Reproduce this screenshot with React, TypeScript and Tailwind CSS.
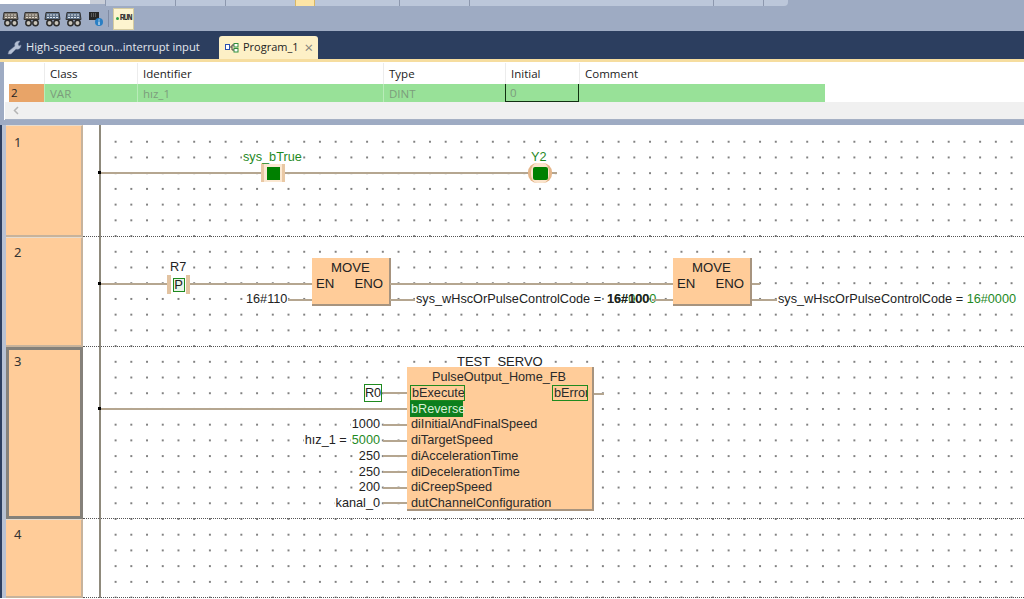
const wire = "absolute h-[2px] bg-[#b5a690]";

function ToolIcon({ blue, info }: { blue?: boolean; info?: boolean }) {
  if (info) {
    return (
      <svg width="18" height="16" viewBox="0 0 18 16" className="shrink-0">
        <rect x="3" y="1" width="10" height="8" fill="#262626" />
        <path d="M5 3h6M5 5h6" stroke="#8d8d8d" strokeDasharray="1 1" />
        <circle cx="13" cy="11" r="4" fill="#2a7fc4" />
        <path d="M13 8.5v1M13 10.5v3.5" stroke="#fff" />
      </svg>
    );
  }
  return (
    <svg width="18" height="16" viewBox="0 0 18 16" className="shrink-0">
      <path d="M2 1.5h13l1 7H1z" fill={blue ? "#5f7187" : "#7c746a"} stroke="#333" />
      <path d="M3 4h12M3 6.5h12" stroke={blue ? "#dfe8f0" : "#ddd8ce"} strokeDasharray="2 1" />
      <circle cx="5.5" cy="12" r="2.7" fill="#c9c4ba" stroke="#2b2b2b" strokeWidth="1.5" />
      <circle cx="12.5" cy="12" r="2.7" fill="#c9c4ba" stroke="#2b2b2b" strokeWidth="1.5" />
    </svg>
  );
}

function TopStrip() {
  return (
    <div className="flex h-[6px] bg-[#9eabc3]">
      <div className="h-[4px] w-[90px] bg-white" />
      <div className="h-[4px] w-[15px] bg-[#c9ced8]" />
      <div className="w-[70px] border-l border-[#8d98ae] bg-[#bcc7da]" />
      <div className="w-[50px] border-l border-[#8d98ae] bg-[#bcc7da]" />
      <div className="w-[70px] border-l border-[#8d98ae] bg-[#bcc7da]" />
      <div className="w-[20px] border-x border-[#d9b765] bg-[#fde5a6]" />
      <div className="w-[84px] bg-[#bcc7da]" />
      <div className="w-[70px] border-l border-[#8d98ae] bg-[#bcc7da]" />
      <div className="w-[244px] border-l border-[#8d98ae] bg-[#bcc7da]" />
      <div className="w-[50px] border-l border-[#8d98ae] bg-[#bcc7da]" />
      <div className="w-[25px] rounded-br-sm border-l border-[#8d98ae] bg-[#bcc7da]" />
    </div>
  );
}

function Toolbar() {
  return (
    <div className="flex h-[25px] items-center bg-[#9eabc3] pl-[2px]">
      <div className="flex w-[105px] gap-[3px]">
        <ToolIcon />
        <ToolIcon />
        <ToolIcon blue />
        <ToolIcon blue />
        <ToolIcon info />
      </div>
      <div className="ml-[1px] h-[17px] w-px bg-[#7f8ba3]" />
      <div className="ml-[4px] flex h-[22px] w-[21px] items-center justify-center gap-px border border-[#d5cba0] bg-[#fdf4cf] font-['Liberation_Mono',monospace] text-[8.5px] font-bold text-[#333]">
        <span className="h-[3px] w-[3px] shrink-0 rounded-full bg-[#2e9e4a]" />
        <span className="tracking-[-1.2px]">RUN</span>
      </div>
    </div>
  );
}

function Tabs() {
  return (
    <div className="flex h-[28px] items-end bg-[#2c3e5f] font-['Open_Sans',sans-serif] text-[11.2px]">
      <div className="flex h-[23px] w-[219px] items-center gap-[4px] pl-[7px] text-[#e4e8ef]">
        <svg width="15" height="15" viewBox="0 0 15 15">
          <path d="M1 14l1-3 6-5c-1-3 1-5 5-5l-2 3 1 2 2-1c0 3-2 5-5 4l-5 5z" fill="#b5c0d4" stroke="#7e8ba5" strokeWidth="0.5" />
        </svg>
        <span className="whitespace-nowrap">High-speed coun...interrupt input</span>
      </div>
      <div className="flex h-[23px] w-[99px] items-center rounded-t-[3px] bg-[#fdf0c6] pl-[6px] text-[11px] text-[#222]">
        <svg width="14" height="10" viewBox="0 0 14 10" className="shrink-0">
          <rect x="0.5" y="1.5" width="4" height="5" fill="#fff" stroke="#2a4fb0" />
          <rect x="9" y="0.5" width="4" height="3.5" fill="#fff" stroke="#2f8f3f" />
          <rect x="9" y="5.5" width="4" height="3.5" fill="#fff" stroke="#2f8f3f" />
          <path d="M5 4h2v-2h2M7 4v3h2" fill="none" stroke="#444" />
        </svg>
        <span className="ml-[4px] whitespace-nowrap">Program_1</span>
        <span className="ml-[6px] text-[15px] leading-none text-[#85857c]">×</span>
      </div>
    </div>
  );
}

function VarTable() {
  const head = "flex items-center border-l border-[#ececec] pl-[5px]";
  const cell = "flex items-center border-l border-[#b9ecb9] pl-[5px]";
  return (
    <div className="border-t-[3px] border-[#f6dd9f] bg-[#9eabc3] pb-[5px] pl-[4px] font-['Open_Sans',sans-serif] text-[11.5px]">
      <div className="bg-white pl-px">
        <div className="grid h-[22px] grid-cols-[39px_93px_246px_122px_74px_246px] pt-px text-[#222]">
          <div />
          <div className={head}>Class</div>
          <div className={head}>Identifier</div>
          <div className={head}>Type</div>
          <div className={head}>Initial</div>
          <div className={head}>Comment</div>
        </div>
        <div className="ml-[4px] grid h-[18px] w-[816px] grid-cols-[35px_93px_246px_122px_74px_246px] items-stretch bg-[#98e198] text-[#7c9c7c]">
          <div className="flex items-center bg-[#e8a468] pl-[2px] pb-px text-[#222]">2</div>
          <div className={cell}>VAR</div>
          <div className={cell}>hız_1</div>
          <div className={cell}>DINT</div>
          <div className="flex items-center border-x border-b border-[#123012] pl-[4px]">0</div>
          <div className="flex items-center pl-[6px]" />
        </div>
        <div className="flex h-[18px] items-center border-b border-[#a5b0c4] bg-[#f0f0f0] pl-[8px]">
          <svg width="6" height="9" viewBox="0 0 6 9">
            <path d="M5 1L1.5 4.5L5 8" fill="none" stroke="#b5b5b5" strokeWidth="1.5" />
          </svg>
        </div>
      </div>
    </div>
  );
}

function Network({ num, height, pad, focused, children }: { num: number; height: string; pad: string; focused?: boolean; children: React.ReactNode }) {
  const cellStyle = focused
    ? "border-[3px] border-[#85817a] pl-[5px]"
    : "border-b-2 border-r-2 border-t border-[#c7b39c] border-t-[#e6dcd0] pl-[8px]";
  return (
    <div className={`flex ${height}`}>
      <div className={`w-[77px] shrink-0 bg-[#ffcc99] text-[13px] text-[#333] ${pad} ${cellStyle}`}>
        {num}
      </div>
      <div className="w-[16px] shrink-0 border-b border-dotted border-[#555] bg-white" />
      <div className="relative min-w-0 flex-1 border-b border-l-2 border-solid border-b-[#555] border-l-[#8f8a7c] bg-white bg-[radial-gradient(circle,#3a3a3a_0.55px,transparent_0.95px)] bg-[length:15.72px_15.72px] bg-fixed bg-[position:-2.3px_-7.6px] font-['Liberation_Sans',Arial,sans-serif] text-[12.7px] leading-none text-[#222] [border-bottom-style:dotted]">
        {children}
      </div>
    </div>
  );
}

function Label({ className, children }: { className: string; children: React.ReactNode }) {
  return <span className={`absolute whitespace-nowrap bg-white px-px ${className}`}>{children}</span>;
}

function MoveBlock({ className }: { className: string }) {
  return (
    <div className={`absolute flex h-[48px] w-[79px] flex-col border-b-2 border-r-2 border-[#a7947f] bg-[#ffcc99] px-[4px] pt-[2px] text-[13.2px] leading-[16px] ${className}`}>
      <div className="text-center">MOVE</div>
      <div className="flex justify-between pr-[2px]">
        <span>EN</span>
        <span>ENO</span>
      </div>
    </div>
  );
}

function Network1() {
  return (
    <>
      <div className="absolute inset-x-0 top-0 h-[4px] bg-white" />
      <span className="absolute left-[-3px] top-[46px] h-[3px] w-[3px] bg-black" />
      <div className={`${wire} left-0 top-[47px] w-[427px]`} />
      <Label className="left-[141px] top-[26px] text-[#1f8a1f]">sys_bTrue</Label>
      <div className="absolute left-[160px] top-[39px] flex h-[18px] w-[24px] items-center justify-center border-x-[3px] border-[#e9c8a4] bg-[#fbe8d2]">
        <span className="h-[13px] w-[13px] bg-[#008000]" />
      </div>
      <Label className="left-[429px] top-[26px] text-[#1f8a1f]">Y2</Label>
      <div className="absolute left-[427px] top-[38px] flex h-[20px] w-[24px] items-center justify-center rounded-[9px] border-x-[3px] border-[#e5b68a] bg-[#fbe4cc]">
        <span className="h-[13px] w-[15px] rounded-[2px] bg-[#008000]" />
      </div>
      <div className={`${wire} left-[451px] top-[47px] w-[5px]`} />
    </>
  );
}

function Network2() {
  return (
    <>
      <span className="absolute left-[-3px] top-[45px] h-[3px] w-[3px] bg-black" />
      <div className={`${wire} left-0 top-[46px] w-[211px]`} />
      <Label className="left-[68px] top-[24px]">R7</Label>
      <div className="absolute left-[66px] top-[38px] flex h-[19px] w-[23px] items-center justify-center border-x-[4px] border-[#e2c3a1] bg-white">
        <span className="flex h-[14px] w-[12px] items-center justify-center border border-[#1f8a1f] bg-[#e9f5e9] text-[13px]">P</span>
      </div>
      <MoveBlock className="left-[211px] top-[21px]" />
      <Label className="left-[144px] top-[56px]">16#110</Label>
      <div className={`${wire} left-[187px] top-[62px] w-[24px]`} />
      <div className={`${wire} left-[289px] top-[46px] w-[283px]`} />
      <div className={`${wire} left-[289px] top-[62px] w-[25px]`} />
      <Label className="left-[314px] top-[56px]">sys_wHscOrPulseControlCode =</Label>
      <span className="absolute left-[506px] top-[56px] whitespace-nowrap text-[#1f8a1f]">16#0000</span>
      <span className="absolute left-[506px] top-[56px] whitespace-nowrap font-semibold">16#100</span>
      <div className={`${wire} left-[551px] top-[62px] w-[21px]`} />
      <MoveBlock className="left-[572px] top-[21px]" />
      <div className={`${wire} left-[651px] top-[46px] w-[8px]`} />
      <div className={`${wire} left-[651px] top-[62px] w-[25px]`} />
      <Label className="left-[676px] top-[56px]">sys_wHscOrPulseControlCode = <span className="text-[#1f8a1f]">16#0000</span></Label>
    </>
  );
}

const pins: { value: string; label: string; prefix?: string; green?: boolean }[] = [
  { value: "1000", label: "diInitialAndFinalSpeed" },
  { value: "5000", label: "diTargetSpeed", prefix: "hız_1 =", green: true },
  { value: "250", label: "diAccelerationTime" },
  { value: "250", label: "diDecelerationTime" },
  { value: "200", label: "diCreepSpeed" },
  { value: "kanal_0", label: "dutChannelConfiguration" },
];

function Network3() {
  return (
    <>
      <span className="absolute left-[-3px] top-[60px] h-[3px] w-[3px] bg-black" />
      <div className={`${wire} left-0 top-[61px] w-[306px]`} />
      <Label className="left-[355px] top-[8px] text-[13px]">TEST_SERVO</Label>

      <div className="absolute left-[263px] top-[37px] flex h-[18px] w-[18px] items-center justify-center border border-[#1f8a1f] bg-white">R0</div>
      <div className={`${wire} left-[282px] top-[45px] w-[24px]`} />

      <div className="absolute left-[180px] top-[70px] flex w-[126px] flex-col items-end">
        {pins.map((p) => (
          <div key={p.label} className="flex h-[15.7px] w-full items-center justify-end">
            {p.prefix && <span className="mr-[3px] bg-white px-px">{p.prefix}</span>}
            <span className={`bg-white px-px ${p.green ? "text-[#1f8a1f]" : ""}`}>{p.value}</span>
            <span className="ml-[2px] h-[2px] w-[24px] shrink-0 bg-[#b5a690]" />
          </div>
        ))}
      </div>

      <div className="absolute left-[306px] top-[20px] h-[144px] w-[187px] border-b-2 border-r-2 border-[#a7947f] bg-[#ffcc99] pl-[3px] pt-[3px] text-[#2a2a2a]">
        <div className="pr-[4px] text-center leading-[15px]">PulseOutput_Home_FB</div>
        <div className="relative flex h-[16px] justify-between">
          <span className="flex w-[55px] items-center overflow-hidden border border-[#1f8a1f] pl-px">bExecute</span>
          <span className="mr-[4px] flex w-[36px] items-center overflow-hidden border border-[#1f8a1f] pl-px">bError</span>
        </div>
        <div className="flex h-[16px] w-[53px] items-center bg-[#0d7f1e] pl-px text-[#d7f0d7]">bReverse</div>
        {pins.map((p) => (
          <div key={p.label} className="flex h-[15.7px] items-center pl-px">{p.label}</div>
        ))}
      </div>
      <div className={`${wire} left-[493px] top-[46px] w-[10px]`} />
    </>
  );
}

export default function App() {
  return (
    <div className="h-[599px] w-[1024px] overflow-hidden bg-white">
      <TopStrip />
      <Toolbar />
      <Tabs />
      <VarTable />
      <div className="border-l-[2px] border-[#2c3e5f]">
        <div className="border-l-[4px] border-[#b7c1d3]">
          <Network num={1} height="h-[112px]" pad="pt-[7px]"><Network1 /></Network>
          <Network num={2} height="h-[110px]" pad="pt-[5px]"><Network2 /></Network>
          <Network num={3} height="h-[172px]" pad="pt-[2px]" focused><Network3 /></Network>
          <Network num={4} height="h-[79px]" pad="pt-[5px]">{null}</Network>
        </div>
      </div>
    </div>
  );
}
